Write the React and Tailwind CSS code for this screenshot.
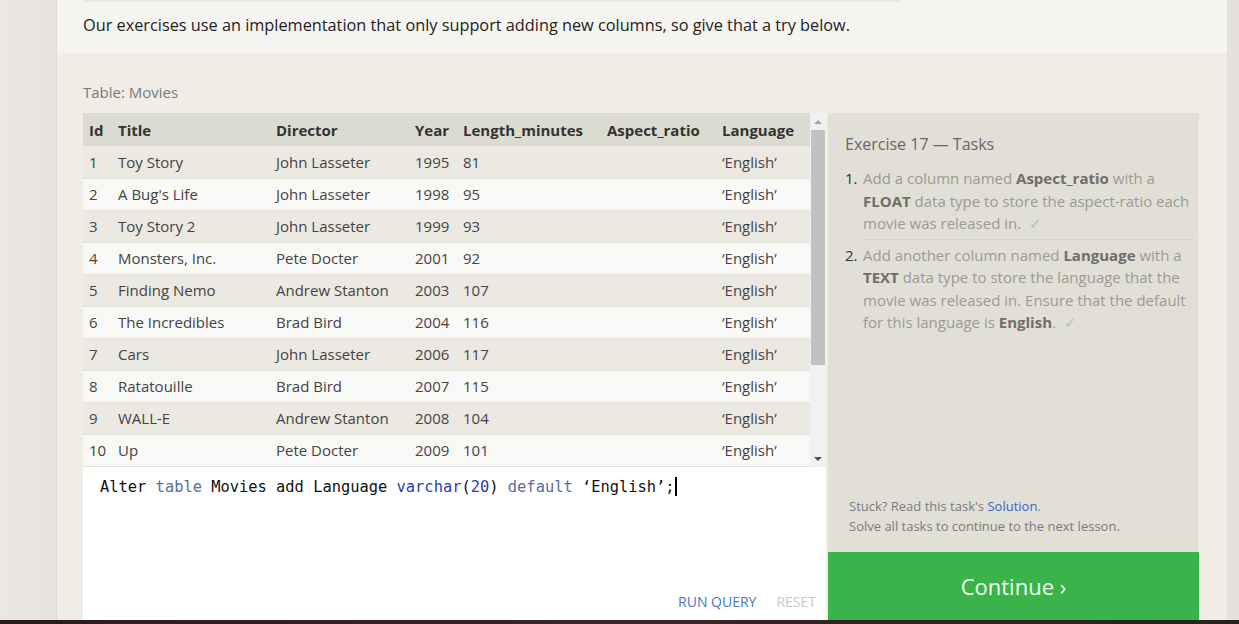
import React from "react";

const movies = [
    [1, "Toy Story", "John Lasseter", 1995, 81],
    [2, "A Bug's Life", "John Lasseter", 1998, 95],
    [3, "Toy Story 2", "John Lasseter", 1999, 93],
    [4, "Monsters, Inc.", "Pete Docter", 2001, 92],
    [5, "Finding Nemo", "Andrew Stanton", 2003, 107],
    [6, "The Incredibles", "Brad Bird", 2004, 116],
    [7, "Cars", "John Lasseter", 2006, 117],
    [8, "Ratatouille", "Brad Bird", 2007, 115],
    [9, "WALL-E", "Andrew Stanton", 2008, 104],
    [10, "Up", "Pete Docter", 2009, 101],
    [11, "Toy Story 3", "Lee Unkrich", 2010, 103],
    [12, "Cars 2", "John Lasseter", 2011, 120],
    [13, "Brave", "Brenda Chapman", 2012, 102],
    [14, "Monsters University", "Dan Scanlon", 2013, 110],
];

const cols = [
    { name: "Id", w: "w-[29px]" },
    { name: "Title", w: "w-[158px]" },
    { name: "Director", w: "w-[139px]" },
    { name: "Year", w: "w-[48px]" },
    { name: "Length_minutes", w: "w-[144px]" },
    { name: "Aspect_ratio", w: "w-[115px]" },
    { name: "Language", w: "w-[94px]" },
];

function Check() {
    return <span className="ml-[8px] text-[#9fd19f]">✓</span>;
}

function App() {
    return (
        <div className="w-full h-[624px] overflow-hidden flex flex-col bg-[#e9e6e2] font-['Open_Sans',sans-serif]">
            <div className="flex flex-1 min-h-0">
                <div className="w-[57px] bg-gradient-to-r from-[#ebe8e4] to-[#e6e2de]" />

                {/* main card */}
                <div className="w-[1170px] flex flex-col shadow-[0_0_2px_rgba(0,0,0,0.12)]">
                    <div className="h-[53px] bg-[#f5f4f0] pl-[26px]">
                        <div className="w-[817px] h-[2px] bg-[#e9e7e1]" />
                        <p className="mt-[12px] text-[16.3px] leading-[22px] text-[#222]">
                            Our exercises use an implementation that only support adding new columns, so give that a try below.
                        </p>
                    </div>

                    <div className="flex-1 bg-[#efede6] pl-[26px] pr-[28px] pt-[29px] flex flex-col">
                        <div className="text-[15px] leading-[20px] text-[#7a7a7a]">Table: Movies</div>

                        <div className="mt-[11px] flex flex-1 gap-[2px]">
                            {/* left: table + editor */}
                            <div className="w-[743px] flex flex-col">
                                <div className="flex h-[354px]">
                                    <div className="w-[727px] overflow-hidden">
                                        <table className="table-fixed border-collapse w-[727px] text-[15px] text-[#444]">
                                            <thead>
                                                <tr className="h-[33px] bg-[#dcdbd1]">
                                                    {cols.map((c) => (
                                                        <th key={c.name} className={`${c.w} pl-[6px] pt-[2px] text-left font-bold text-[#333]`}>
                                                            {c.name}
                                                        </th>
                                                    ))}
                                                </tr>
                                            </thead>
                                            <tbody>
                                                {movies.map((m, i) => (
                                                    <tr
                                                        key={m[0]}
                                                        className={`h-[32px] border-b border-[#e3e1da] ${i % 2 === 0 ? "bg-[#ebe9e2]" : "bg-[#f8f8f6]"}`}
                                                    >
                                                        <td className="pl-[6px]">{m[0]}</td>
                                                        <td className="pl-[6px]">{m[1]}</td>
                                                        <td className="pl-[6px]">{m[2]}</td>
                                                        <td className="pl-[6px]">{m[3]}</td>
                                                        <td className="pl-[6px]">{m[4]}</td>
                                                        <td className="pl-[6px]"></td>
                                                        <td className="pl-[6px]">‘English’</td>
                                                    </tr>
                                                ))}
                                            </tbody>
                                        </table>
                                    </div>

                                    {/* scrollbar */}
                                    <div className="w-[16px] bg-[#f1f1f1] flex flex-col items-center">
                                        <div className="h-[17px] flex items-center justify-center">
                                            <div className="w-0 h-0 border-l-[4px] border-r-[4px] border-b-[4px] border-l-transparent border-r-transparent border-b-[#a3a3a3]" />
                                        </div>
                                        <div className="w-[14px] h-[235px] bg-[#c1c1c1]" />
                                        <div className="flex-1" />
                                        <div className="h-[17px] flex items-center justify-center">
                                            <div className="w-0 h-0 border-l-[4px] border-r-[4px] border-t-[4px] border-l-transparent border-r-transparent border-t-[#505050]" />
                                        </div>
                                    </div>
                                </div>

                                {/* editor */}
                                <div className="flex-1 bg-white flex flex-col">
                                    <div className="pl-[17px] pt-[9px] font-['DejaVu_Sans_Mono',monospace] text-[15.4px] leading-[22px] text-[#111] whitespace-pre">
                                        Alter <span className="text-[#5a6d99]">table</span> Movies add Language{" "}
                                        <span className="text-[#2a3bb0]">varchar</span>(<span className="text-[#2a3bb0]">20</span>){" "}
                                        <span className="text-[#5a6d99]">default</span> ‘English’;
                                        <span className="inline-block w-[2px] h-[19px] bg-black align-[-4px]" />
                                    </div>
                                    <div className="flex-1" />
                                    <div className="flex justify-end gap-[20px] pr-[10px] pb-[9px] text-[14px] leading-[18px]">
                                        <span className="text-[#4a77c4]">RUN QUERY</span>
                                        <span className="text-[#c8c8c8]">RESET</span>
                                    </div>
                                </div>
                            </div>

                            {/* right: tasks */}
                            <div className="w-[371px] flex flex-col">
                                <div className="flex-1 bg-[#e2e0d6] flex flex-col pl-[17px] pr-[5px] pt-[20px] pb-[16px]">
                                    <div className="text-[16px] leading-[22px] text-[#666]">Exercise 17 — Tasks</div>
                                    <div className="mt-[12px] text-[15px] leading-[22.5px] text-[#9a9a94]">
                                        <div className="flex pb-[4px]">
                                            <span className="w-[18px] shrink-0 text-[#333]">1.</span>
                                            <div className="border-b border-[#d2d0c6] pb-[4px] pr-[2px]">
                                                Add a column named <b className="text-[#6e6e6a]">Aspect_ratio</b> with a{" "}
                                                <b className="text-[#6e6e6a]">FLOAT</b> data type to store the aspect-ratio each movie was released in.
                                                <Check />
                                            </div>
                                        </div>
                                        <div className="flex">
                                            <span className="w-[18px] shrink-0 text-[#333]">2.</span>
                                            <div className="pr-[2px]">
                                                Add another column named <b className="text-[#6e6e6a]">Language</b> with a{" "}
                                                <b className="text-[#6e6e6a]">TEXT</b> data type to store the language that the movie was released in. Ensure that the default for this language is{" "}
                                                <b className="text-[#6e6e6a]">English</b>.
                                                <Check />
                                            </div>
                                        </div>
                                    </div>
                                    <div className="flex-1" />
                                    <div className="pl-[4px] text-[13px] leading-[20px] text-[#7a7a7a]">
                                        <div>
                                            Stuck? Read this task's <span className="text-[#3d63c4]">Solution</span>.
                                        </div>
                                        <div>Solve all tasks to continue to the next lesson.</div>
                                    </div>
                                </div>
                                <div className="h-[68px] bg-[#39b34a] flex items-center justify-center text-[22px] text-[#f2fff2]">
                                    Continue ›
                                </div>
                            </div>
                        </div>
                    </div>
                </div>

                <div className="flex-1 bg-[#e4e1de]" />
            </div>
            <div className="h-[4px] bg-gradient-to-r from-[#2b1a1d] via-[#3a2426] to-[#262420]" />
        </div>
    );
}

export default App;
